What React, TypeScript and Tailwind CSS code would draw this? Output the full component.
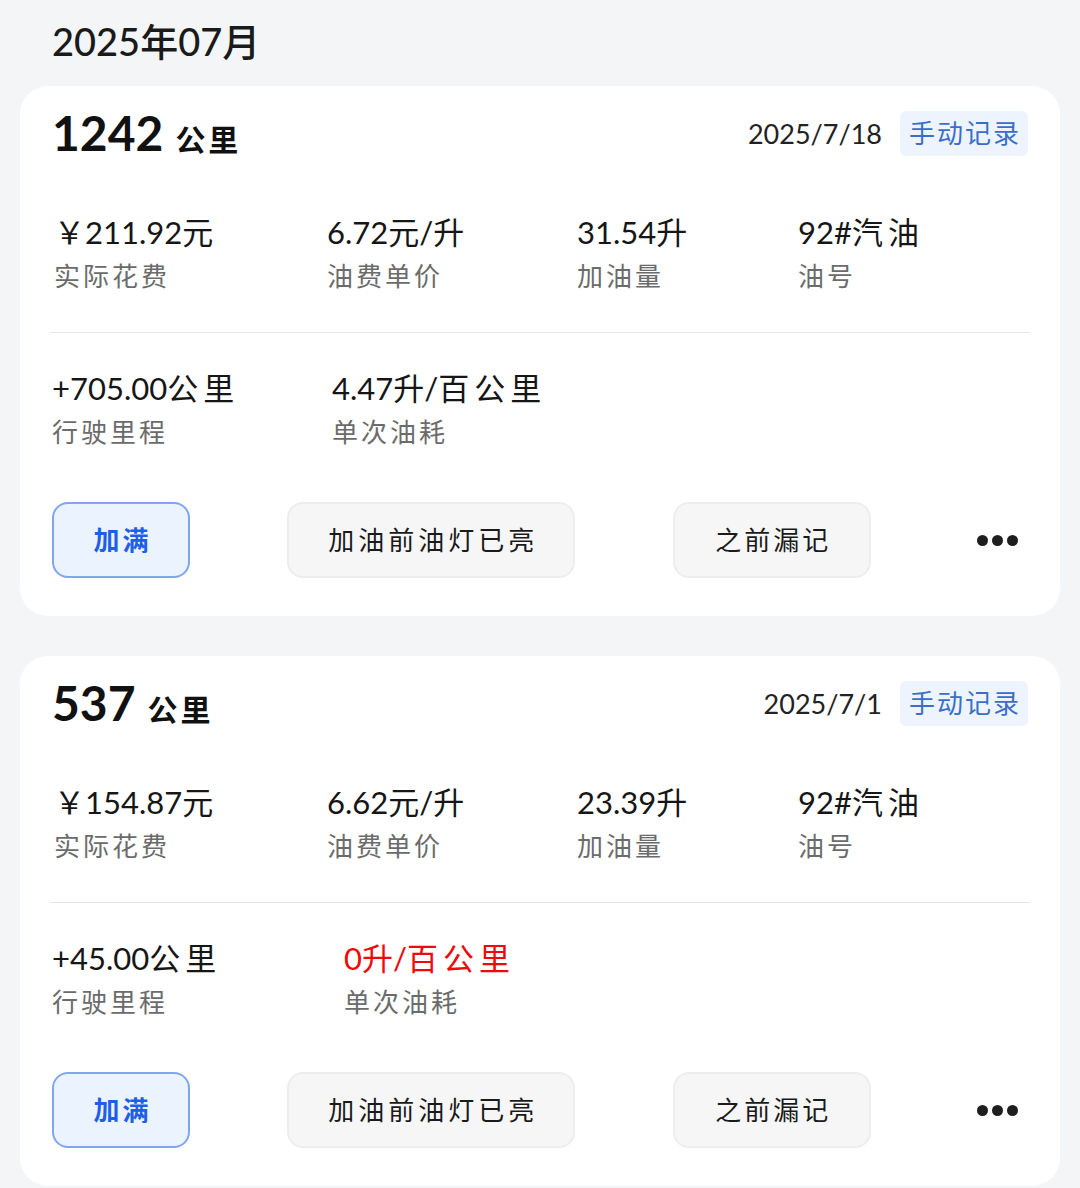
import React from "react";

const FONT = { fontFamily: 'Lato, "Noto Sans CJK SC", sans-serif' };

type Rec = {
  km: string;
  date: string;
  cost: string;
  price: string;
  volume: string;
  oil: string;
  dist: string;
  consume: string;
  red: boolean;
  wide: boolean;
};

const records: Rec[] = [
  {
    km: "1242",
    date: "2025/7/18",
    cost: "￥211.92元",
    price: "6.72元/升",
    volume: "31.54升",
    oil: "92#汽油",
    dist: "+705.00公里",
    consume: "4.47升/百公里",
    red: false,
    wide: false,
  },
  {
    km: "537",
    date: "2025/7/1",
    cost: "￥154.87元",
    price: "6.62元/升",
    volume: "23.39升",
    oil: "92#汽油",
    dist: "+45.00公里",
    consume: "0升/百公里",
    red: true,
    wide: true,
  },
];

// Widen only the space between consecutive CJK ideographs, as in the reference.
function Spaced({ text }: { text: string }) {
  const parts = text.split(/([\u4e00-\u9fff]+)/).filter((p) => p.length > 0);
  return (
    <>
      {parts.map((p, i) =>
        /[\u4e00-\u9fff]/.test(p) && p.length > 1 ? (
          <span key={i}>
            <span className="tracking-[5px]">{p.slice(0, -1)}</span>
            {p.slice(-1)}
          </span>
        ) : (
          <span key={i}>{p}</span>
        )
      )}
    </>
  );
}

function Stat({ value, label, red }: { value: string; label: string; red?: boolean }) {
  return (
    <div className="flex flex-col">
      <div
        className={`text-[31px] leading-[40px] whitespace-nowrap ${
          red ? "text-[#ee0a0a]" : "text-[#161616]"
        }`}
      >
        <Spaced text={value} />
      </div>
      <div className="mt-[6px] text-[26px] leading-[36px] tracking-[3px] text-[#6b6b6b] whitespace-nowrap">
        {label}
      </div>
    </div>
  );
}

function Card({ r }: { r: Rec }) {
  return (
    <div className="bg-white rounded-[28px] px-[32px] pt-[24px] pb-[38px]">
      <div className="flex h-[46px] items-center justify-between">
        <div className="flex items-baseline gap-[12px] text-[#111]">
          <span className="text-[48px] font-bold leading-none">{r.km}</span>
          <span className="text-[30px] font-bold leading-none tracking-[3px]">公里</span>
        </div>
        <div className="flex items-center gap-[18px]">
          <span className="text-[27px] text-[#222] leading-none">{r.date}</span>
          <span className="h-[45px] pl-[9px] pr-[7px] flex items-center rounded-[6px] bg-[#edf4fe] text-[#3b6fc7] text-[26px] tracking-[2px]">
            手动记录
          </span>
        </div>
      </div>

      <div className="mt-[56px] flex">
        <div className="w-[275px] pl-[2px]">
          <Stat value={r.cost} label="实际花费" />
        </div>
        <div className="w-[250px]">
          <Stat value={r.price} label="油费单价" />
        </div>
        <div className="w-[221px]">
          <Stat value={r.volume} label="加油量" />
        </div>
        <div>
          <Stat value={r.oil} label="油号" />
        </div>
      </div>

      <div className="mt-[38px] -mx-[2px] h-px bg-[#e6e6e6]" />

      <div className="mt-[35px] flex">
        <div className={r.wide ? "w-[292px]" : "w-[280px]"}>
          <Stat value={r.dist} label="行驶里程" />
        </div>
        <div>
          <Stat value={r.consume} label="单次油耗" red={r.red} />
        </div>
      </div>

      <div className="mt-[52px] flex items-center justify-between">
        <button className="h-[76px] w-[138px] rounded-[16px] border-2 border-[#80a7ee] bg-[#ebf3ff] pl-[3px] text-[26px] font-bold tracking-[3px] text-[#1f5fe8]">
          加满
        </button>
        <button className="h-[76px] w-[288px] rounded-[16px] border-2 border-[#ededed] bg-[#f6f6f6] pl-[4px] text-[26px] text-[#1a1a1a] tracking-[4px]">
          加油前油灯已亮
        </button>
        <button className="h-[76px] w-[198px] rounded-[16px] border-2 border-[#ededed] bg-[#f6f6f6] pl-[3px] text-[26px] text-[#1a1a1a] tracking-[3px]">
          之前漏记
        </button>
        <div className="w-[60px] flex items-center justify-center gap-[4px]">
          <span className="block h-[11px] w-[11px] rounded-full bg-[#1e1e1e]" />
          <span className="block h-[11px] w-[11px] rounded-full bg-[#1e1e1e]" />
          <span className="block h-[11px] w-[11px] rounded-full bg-[#1e1e1e]" />
        </div>
      </div>
    </div>
  );
}

export default function App() {
  return (
    <div className="min-h-[1188px] w-[1080px] bg-[#f4f5f7] overflow-hidden" style={FONT}>
      <div className="px-[52px] pt-[18px] h-[86px]">
        <h1 className="text-[38px] font-medium leading-[46px] text-[#1a1a1a]">2025年07月</h1>
      </div>
      <div className="px-[20px] flex flex-col gap-[40px]">
        {records.map((r) => (
          <Card key={r.km} r={r} />
        ))}
      </div>
    </div>
  );
}
